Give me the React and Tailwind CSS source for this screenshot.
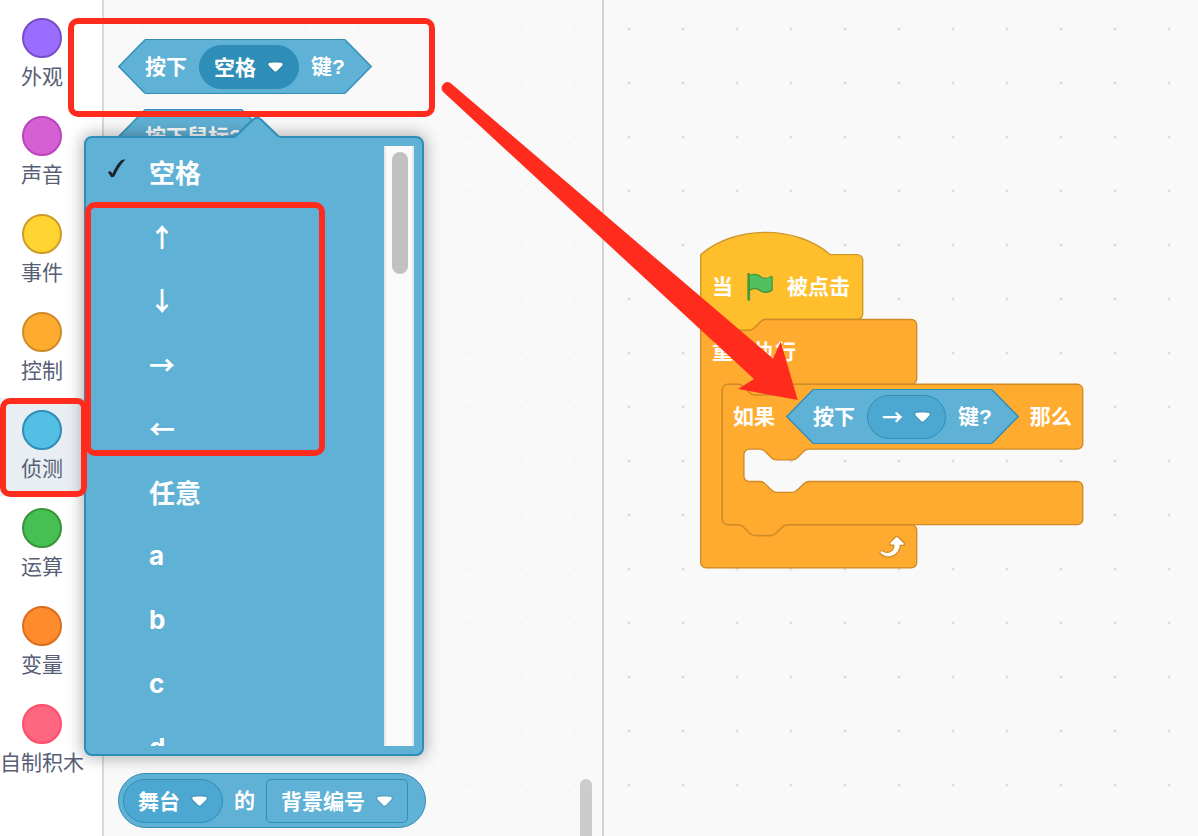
import { clsx } from 'clsx';

const categories = [
  { name: '外观', dot: 'bg-[#9a6dff] border-[#774dcb]' },
  { name: '声音', dot: 'bg-[#d460d4] border-[#bd42bd]' },
  { name: '事件', dot: 'bg-[#ffd430] border-[#cc9b29]' },
  { name: '控制', dot: 'bg-[#ffab30] border-[#cf8b27]' },
  { name: '侦测', dot: 'bg-[#54bfe5] border-[#2e8eb8]', active: true },
  { name: '运算', dot: 'bg-[#46bf53] border-[#389438]' },
  { name: '变量', dot: 'bg-[#ff8c2c] border-[#db6e1e]' },
  { name: '自制积木', dot: 'bg-[#ff6680] border-[#ff4d6a]' },
];

const keys = ['空格', '↑', '↓', '→', '←', '任意', 'a', 'b', 'c', 'd'];

/* Block outlines, in block units (1 unit = 1.35px) */
const NOTCH_RIGHT = 'c 2,0 3,1 4,2 l 4,4 c 1,1 2,2 4,2 h 12 c 2,0 3,-1 4,-2 l 4,-4 c 1,-1 2,-2 4,-2';
const NOTCH_LEFT = 'c -2,0 -3,1 -4,2 l -4,4 c -1,1 -2,2 -4,2 h -12 c -2,0 -3,-1 -4,-2 l -4,-4 c -1,-1 -2,-2 -4,-2';

const hatPath = `M 0,0 c 25,-22 71,-22 96,0 H 116 a 4,4 0 0,1 4,4 v 40 a 4,4 0 0,1 -4,4 H 48 ${NOTCH_LEFT} H 4 a 4,4 0 0,1 -4,-4 z`;

function cBlockPath(width, mouth, hasNext) {
  return [
    `M 0,4 A 4,4 0 0,1 4,0 H 12 ${NOTCH_RIGHT} H ${width - 4}`,
    `a 4,4 0 0,1 4,4 v 40 a 4,4 0 0,1 -4,4 H 64 ${NOTCH_LEFT} h -8`,
    `a 4,4 0 0,0 -4,4 v ${mouth - 8} a 4,4 0 0,0 4,4 h 8 ${NOTCH_RIGHT} H ${width - 4}`,
    `a 4,4 0 0,1 4,4 v 24 a 4,4 0 0,1 -4,4`,
    hasNext ? `H 48 ${NOTCH_LEFT}` : '',
    `H 4 a 4,4 0 0,1 -4,-4 z`,
  ].join(' ');
}

function DropArrow() {
  return (
    <svg className="pointer-events-none absolute right-[15px] top-1/2 h-3 w-[17px] -translate-y-1/2" viewBox="0 0 12.71 8.79">
      <path
        d="M12.71,2.44A2.41,2.41,0,0,1,12,4.16L8.08,8.08a2.45,2.45,0,0,1-3.45,0L0.72,4.16A2.42,2.42,0,0,1,0,2.44,2.48,2.48,0,0,1,.71.71C1,0.47,1.43,0,6.36,0S11.75,0.46,12,.71A2.44,2.44,0,0,1,12.71,2.44Z"
        fill="#231f20"
        opacity="0.1"
      />
      <path
        d="M6.36,7.79a1.43,1.43,0,0,1-1-.42L1.42,3.45a1.44,1.44,0,0,1,0-2c0.56-.56,9.31-0.56,9.87,0a1.44,1.44,0,0,1,0,2L7.37,7.37A1.43,1.43,0,0,1,6.36,7.79Z"
        fill="#fff"
      />
    </svg>
  );
}

function Field({ label, value, className }) {
  return (
    <label className="relative block">
      <select
        aria-label={label}
        className={clsx(
          "block h-11 appearance-none border pl-[14px] pr-[42px] font-['Noto_Sans_CJK_SC',sans-serif] text-[21px] font-bold text-white",
          className
        )}
      >
        <option>{value}</option>
      </select>
      <DropArrow />
    </label>
  );
}

/* Hexagonal reporter: two drawn caps with a stretchable body between them */
function BooleanBlock({ children }) {
  return (
    <div className="flex h-[55px] w-fit text-[21px] font-bold text-white">
      <svg className="h-[55px] w-[27px] shrink-0" viewBox="0 0 27 55">
        <path d="M27,0.7 L0.8,27.5 L27,54.3" fill="#60b1d6" stroke="#2e8eb8" strokeWidth="1.35" />
      </svg>
      <div className="flex items-center gap-3 whitespace-nowrap border-y border-[#2e8eb8] bg-[#60b1d6]">{children}</div>
      <svg className="h-[55px] w-[27px] shrink-0" viewBox="0 0 27 55">
        <path d="M0,0.7 L26.2,27.5 L0,54.3" fill="#60b1d6" stroke="#2e8eb8" strokeWidth="1.35" />
      </svg>
    </div>
  );
}

function GreenFlag() {
  return (
    <svg className="size-8" viewBox="0 0 24 24">
      <path
        d="M20.8 3.7c-.4-.2-.9-.1-1.2.2-2 1.6-4.8 1.6-6.8 0-2.3-1.9-5.6-2.3-8.3-1v-.4c0-.6-.5-1-1-1s-1 .4-1 1v18.8c0 .5.5 1 1 1h.1c.5 0 1-.5 1-1v-6.4c1-.7 2.1-1.2 3.4-1.3 1.2 0 2.4.4 3.4 1.2 2.9 2.3 7 2.3 9.8 0 .3-.2.4-.5.4-.9V4.7c0-.5-.3-.9-.8-1z"
        fill="#45993d"
      />
      <path
        d="M20.5 13.9c-2.5 2-6.1 2-8.6 0-1.2-1-2.6-1.4-4.1-1.4-1.2.1-2.3.5-3.3 1.1V4c2.4-1.4 5.2-1.2 7.3.4 2.4 2 5.7 2 8.1 0 .1-.1.3-.2.4-.1s.3.2.3.4v9c.1.1 0 .2-.1.2z"
        fill="#54bf5e"
      />
    </svg>
  );
}

function RepeatIcon() {
  return (
    <svg className="size-8" viewBox="0 0 24 24">
      <path
        d="M23.3,11c-0.3,0.6-0.9,1-1.5,1h-1.6c-0.1,1.3-0.5,2.5-1.1,3.6c-0.9,1.7-2.3,3.2-4.1,4.1c-1.7,0.9-3.6,1.2-5.5,0.9c-1.8-0.3-3.5-1.1-4.9-2.3c-0.7-0.7-0.7-1.9,0-2.6c0.6-0.6,1.6-0.7,2.3-0.2H7c0.9,0.6,1.9,0.9,2.9,0.9s1.9-0.3,2.7-0.9c1.1-0.8,1.8-2.1,1.8-3.5h-1.5c-0.9,0-1.7-0.7-1.7-1.7c0-0.4,0.2-0.9,0.5-1.2l4.4-4.4c0.7-0.6,1.7-0.6,2.4,0L23,9.2C23.5,9.7,23.6,10.4,23.3,11z"
        fill="#cf8b27"
      />
      <path
        d="M21.8,11h-2.6c0,1.5-0.3,2.9-1,4.2c-0.8,1.6-2.1,2.8-3.7,3.6c-1.5,0.8-3.3,1.1-4.9,0.8c-1.6-0.2-3.2-1-4.4-2.1c-0.4-0.3-0.4-0.9-0.1-1.2c0.3-0.4,0.9-0.4,1.2-0.1l0,0c1,0.7,2.2,1.1,3.4,1.1s2.3-0.3,3.3-1c0.9-0.6,1.6-1.5,2-2.6c0.3-0.9,0.4-1.8,0.2-2.8h-2.4c-0.4,0-0.7-0.3-0.7-0.7c0-0.2,0.1-0.3,0.2-0.4l4.4-4.4c0.3-0.3,0.7-0.3,0.9,0L22,9.8c0.3,0.3,0.4,0.6,0.3,0.9S22,11,21.8,11z"
        fill="#fff"
      />
    </svg>
  );
}

function CategoryNav() {
  return (
    <nav className="w-[104px] shrink-0 border-r-2 border-[#d9d9d9] bg-white pt-[6px]">
      {categories.map((c) => (
        <button
          key={c.name}
          type="button"
          className={clsx('flex h-[98px] w-full flex-col items-center pr-[18px] pt-3', c.active && 'bg-[#e9eef2]')}
        >
          <span className={clsx('size-10 rounded-full border-2', c.dot)} />
          <span className="mt-1 whitespace-nowrap text-[21px] leading-[30px] text-[#575e75]">{c.name}</span>
        </button>
      ))}
    </nav>
  );
}

function Flyout() {
  return (
    <section className="relative flex w-[500px] shrink-0 flex-col gap-[15px] border-r-2 border-[#d4d4d4] bg-[#f9f9f9]/80 pb-2 pl-[14px] pt-[39px]">
      <BooleanBlock>
        <span>按下</span>
        <Field label="按键" value="空格" className="rounded-full border-[#2e8eb8] bg-[#2e8eb8]" />
        <span>键?</span>
      </BooleanBlock>
      <BooleanBlock>
        <span>按下鼠标?</span>
      </BooleanBlock>
      <div className="mt-auto flex h-[55px] w-fit items-center gap-[11px] rounded-full border border-[#2e8eb8] bg-[#60b1d6] pl-1 pr-[17px] text-[21px] font-bold text-white">
        <Field label="对象" value="舞台" className="rounded-full border-[#2e8eb8] bg-[#4ca8d1]" />
        <span>的</span>
        <Field label="属性" value="背景编号" className="rounded-[5px] border-[#2e8eb8] bg-[#60b1d6]" />
      </div>
      {/* Scrollbar thumb */}
      <div className="absolute bottom-0 right-[10px] h-[57px] w-3 rounded-t-full bg-[#cccccc]" />
    </section>
  );
}

function Script() {
  return (
    <div className="absolute left-24 top-[254px] w-[217px] whitespace-nowrap text-[21px] font-bold text-white">
      <svg className="absolute left-0 top-0 h-[320px] w-[390px] overflow-visible" viewBox="0 0 390 320">
        <g transform="translate(0.7 0.7) scale(1.35)" strokeWidth="1">
          <path d={hatPath} fill="#ffbf2c" stroke="#cc9929" />
          <path transform="translate(0 48)" d={cBlockPath(160, 104, false)} fill="#ffab30" stroke="#cf8b27" />
          <path transform="translate(16 96)" d={cBlockPath(267, 24, true)} fill="#ffab30" stroke="#cf8b27" />
        </g>
      </svg>
      <div className="relative">
        <div className="flex h-[65px] items-center gap-[11px] pl-3">
          <span>当</span>
          <GreenFlag />
          <span>被点击</span>
        </div>
        <div className="flex h-[65px] items-center pl-3">重复执行</div>
        <div className="flex h-[65px] w-max items-center gap-[11px] pl-[33px]">
          <span>如果</span>
          <BooleanBlock>
            <span>按下</span>
            <Field label="按键" value="→" className="rounded-full border-[#2e8eb8] bg-[#4ca8d1]" />
            <span>键?</span>
          </BooleanBlock>
          <span>那么</span>
        </div>
        <div className="mt-[75px] flex h-11 items-center justify-end pr-[11px]">
          <RepeatIcon />
        </div>
      </div>
    </div>
  );
}

function KeyMenu() {
  return (
    <div className="absolute left-[84px] top-[136px] flex w-[340px] rounded-lg border-2 border-[#2e8eb8] bg-[#60b1d6] py-2 pr-2 shadow-[0_0_16px_2px_rgba(0,0,0,0.3)]">
      {/* Pointer */}
      <svg className="absolute -top-[22px] left-[147px] h-6 w-12" viewBox="0 0 48 24">
        <path d="M1,24 L1,21.5 L20,3.5 Q24,0 28,3.5 L47,21.5 L47,24 Z" fill="#60b1d6" />
        <path d="M0,21 Q2,21 4,19 L20,3.5 Q24,0 28,3.5 L46,21" fill="none" stroke="#2e8eb8" strokeWidth="2" />
      </svg>
      <ul className="flex h-[600px] flex-1 flex-col gap-[10px] overflow-y-auto [scrollbar-width:none]">
        {keys.map((k, i) => (
          <li key={k} className="shrink-0">
            <button
              type="button"
              className={clsx(
                'flex h-[54px] w-full items-center pb-1 pl-5 text-left text-[26px] font-bold text-white',
                /^[a-z]$/.test(k) ? 'font-[Inter,sans-serif]' : "font-['Noto_Sans_CJK_SC',sans-serif]"
              )}
            >
              <span className="w-[43px]">
                {i === 0 && (
                  <svg className="-mt-1 h-6 w-6" viewBox="0 0 24 24">
                    <path d="M2,15.6 Q3.2,13.8 4.8,14.4 Q5.8,15.2 6.2,17 Q11,7 15,3.6 Q17,2.2 19.4,2.6 Q13.5,8.6 8.6,19 Q6.8,21 5,20 Q3.6,17.6 2,15.6 Z" fill="#1c2327" />
                  </svg>
                )}
              </span>
              {k}
            </button>
          </li>
        ))}
      </ul>
      <div className="w-[30px] border-x-2 border-[#e8e8e8] bg-[#fafafa] px-[6px] pt-[6px]">
        <div className="h-[122px] w-4 rounded-full bg-[#c1c1c1]" />
      </div>
    </div>
  );
}

/* Red marker boxes and the arrow drawn over the editor */
function Annotations() {
  return (
    <div className="pointer-events-none absolute inset-0">
      <div className="absolute left-[68px] top-[18px] h-[99px] w-[367px] rounded-[10px] border-6 border-[#ff2c1d]" />
      <div className="absolute left-[85px] top-[202px] h-[254px] w-[240px] rounded-[10px] border-6 border-[#ff2c1d]" />
      <div className="absolute left-0 top-[398px] h-[99px] w-[87px] rounded-[10px] border-6 border-[#ff2c1d]" />
      <svg className="absolute left-[430px] top-[70px] h-[340px] w-[380px]" viewBox="430 70 380 340">
        <path d="M450.5,83 L773,358.5 L780.7,341.7 L797.7,400 L738,389 L754,379 L443,91.8 A5.9,5.9 0 0,1 450.5,83 Z" fill="#ff2c1d" />
      </svg>
    </div>
  );
}

export default function App() {
  return (
    <div className="relative flex h-screen overflow-hidden bg-[#f9f9f9] bg-[radial-gradient(circle,#dddddd_1px,transparent_2px)] bg-size-[54px_54px] bg-position-[8px_2px] font-['Liberation_Sans','Noto_Sans_CJK_SC',sans-serif]">
      <CategoryNav />
      <Flyout />
      <main className="relative flex-1">
        <Script />
      </main>
      <KeyMenu />
      <Annotations />
    </div>
  );
}
